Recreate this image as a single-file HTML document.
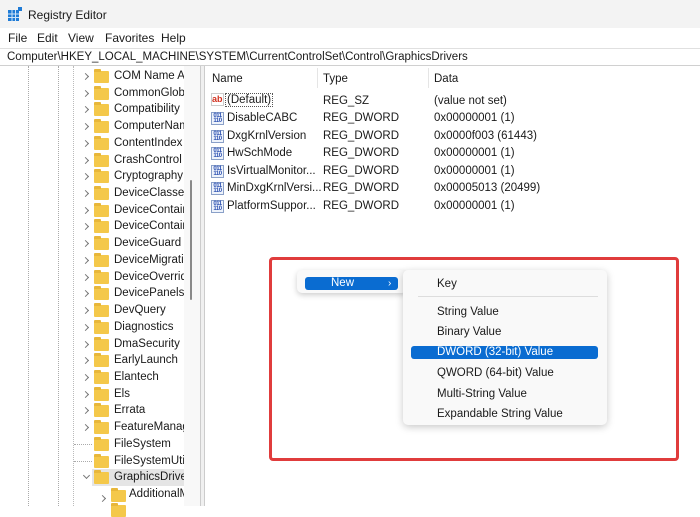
<!DOCTYPE html>
<html><head><style>
*{margin:0;padding:0;box-sizing:border-box}
body{width:700px;height:506px;overflow:hidden;background:#fff;font-family:"Liberation Sans",sans-serif;font-size:11.5px;color:#1a1a1a;position:relative}
.a{position:absolute;white-space:nowrap}
.fold{position:absolute;width:15px;height:12px;background:#f4c84a;border-radius:1px}
.fold:before{content:"";position:absolute;left:0;top:-2px;width:7px;height:3px;background:#e8b73a;border-radius:1px 1px 0 0}
.chev{position:absolute;width:5px;height:5px;border-right:1.3px solid #777;border-top:1.3px solid #777;transform:rotate(45deg)}
.ic{position:absolute;width:13px;height:13px;border:1px solid #8aa0c8;background:#eef3fb;font-size:6px;line-height:5px;color:#2a4fb0;font-weight:bold;text-align:center;padding-top:1px;letter-spacing:-0.5px}
.mi{position:absolute;left:437px;font-size:11.5px}
</style></head><body>
<div class="a" style="left:0;top:0;width:700px;height:28px;background:#f3f3f3"></div>
<svg class="a" style="left:8px;top:7px" width="14" height="14"><rect x="0" y="3" width="11" height="11" fill="#1f7bd6"/><g stroke="#cfe4f8" stroke-width="1"><line x1="0" y1="7" x2="11" y2="7"/><line x1="0" y1="10.5" x2="11" y2="10.5"/><line x1="4" y1="3" x2="4" y2="14"/><line x1="7.5" y1="3" x2="7.5" y2="14"/></g><rect x="10" y="0" width="4" height="4" fill="#1f7bd6"/></svg>
<div class="a" style="left:28px;top:8px;font-size:12px">Registry Editor</div>
<div class="a" style="left:0;top:28px;width:700px;height:20px;background:#fff"></div>
<div class="a" style="left:8px;top:31px;font-size:12px">File</div>
<div class="a" style="left:37px;top:31px;font-size:12px">Edit</div>
<div class="a" style="left:68px;top:31px;font-size:12px">View</div>
<div class="a" style="left:105px;top:31px;font-size:12px">Favorites</div>
<div class="a" style="left:161px;top:31px;font-size:12px">Help</div>
<div class="a" style="left:0;top:48px;width:700px;height:18px;border-top:1px solid #e0e0e0;border-bottom:1px solid #d0d0d0"></div>
<div class="a" style="left:7px;top:51px;font-size:11.5px">Computer\HKEY_LOCAL_MACHINE\SYSTEM\CurrentControlSet\Control\GraphicsDrivers</div>
<div class="a" style="left:28px;top:66px;height:440px;border-left:1px dotted #aaa"></div>
<div class="a" style="left:58px;top:66px;height:440px;border-left:1px dotted #aaa"></div>
<div class="a" style="left:73px;top:66px;height:440px;border-left:1px dotted #bbb"></div>
<div class="a" style="left:184px;top:66px;width:16px;height:440px;background:#f8f8f8"></div>
<div class="a" style="left:190px;top:180px;width:2px;height:120px;background:#8a8a8a;border-radius:1px"></div>
<div class="a" style="left:200px;top:66px;width:5px;height:440px;background:#f0f0f0;border-left:1px solid #ccc;border-right:1px solid #ccc"></div>
<div class="a" style="left:92px;top:469px;width:92px;height:17px;background:#e5e5e5"></div>
<div id="tree"></div>
<div class="a" style="left:317px;top:68px;height:20px;border-left:1px solid #e5e5e5"></div>
<div class="a" style="left:428px;top:68px;height:20px;border-left:1px solid #e5e5e5"></div>
<div class="a" style="left:212px;top:73px">Name</div>
<div class="a" style="left:323px;top:73px">Type</div>
<div class="a" style="left:434px;top:73px">Data</div>
<div class="a" style="left:211px;top:93px;width:13px;height:13px;border:1px solid #ccc;font-size:9px;color:#d2301e;font-weight:bold;line-height:10px">ab</div>
<div class="a" style="left:225px;top:93px;border:1px dotted #555;padding:0 1px">(Default)</div>
<div class="a" style="left:323px;top:95px">REG_SZ</div>
<div class="a" style="left:434px;top:95px">(value not set)</div>
<div id="vals"></div>
<div class="a" style="left:269px;top:257px;width:410px;height:204px;border:3px solid #e03c3c;border-radius:4px"></div>
<div class="a" style="left:297px;top:270px;width:110px;height:23px;background:#f9f9f9;border-radius:5px;box-shadow:0 2px 6px rgba(0,0,0,.2)"></div>
<div class="a" style="left:305px;top:277px;width:93px;height:13px;background:#0a6cd1;border-radius:3px;color:#fff;font-size:11.5px;line-height:13px"><span style="position:absolute;left:26px">New</span><span style="position:absolute;left:83px;font-size:10px">›</span></div>
<div class="a" style="left:403px;top:270px;width:204px;height:155px;background:#f9f9f9;border-radius:5px;box-shadow:0 2px 8px rgba(0,0,0,.22)"></div>
<div class="a" style="left:418px;top:296px;width:180px;height:1px;background:#ddd"></div>
<div class="a" style="left:411px;top:346px;width:187px;height:13px;background:#0a6cd1;border-radius:3px"></div>
<div class="mi" style="top:278px">Key</div>
<div class="mi" style="top:306px">String Value</div>
<div class="mi" style="top:326px">Binary Value</div>
<div class="mi" style="top:346px;color:#fff">DWORD (32-bit) Value</div>
<div class="mi" style="top:367px">QWORD (64-bit) Value</div>
<div class="mi" style="top:388px">Multi-String Value</div>
<div class="mi" style="top:408px">Expandable String Value</div>
<script>
var t=["COM Name A","CommonGlob","Compatibility","ComputerNam","ContentIndex","CrashControl","Cryptography","DeviceClasses","DeviceContain","DeviceContain","DeviceGuard","DeviceMigratio","DeviceOverrid","DevicePanels","DevQuery","Diagnostics","DmaSecurity","EarlyLaunch","Elantech","Els","Errata","FeatureManag","FileSystem","FileSystemUtil","GraphicsDriver"];
var noch={22:1,23:1};var h="";
t.forEach(function(s,i){var y=69+i*16.72;
if(i==24)h+='<div class="chev" style="left:84px;top:'+(y+3)+'px;transform:rotate(135deg)"></div>';
else if(!noch[i])h+='<div class="chev" style="left:83px;top:'+(y+5)+'px"></div>';
else h+='<div class="a" style="left:74px;top:'+(y+7)+'px;width:18px;border-top:1px dotted #aaa"></div>';
h+='<div class="fold" style="left:94px;top:'+(y+2)+'px"></div><div class="a" style="left:114px;top:'+(y+1)+'px;width:70px;overflow:hidden">'+s+'</div>';});
h+='<div class="chev" style="left:100px;top:496px"></div><div class="fold" style="left:111px;top:490px"></div><div class="a" style="left:129px;top:488px;width:55px;overflow:hidden">AdditionalM</div><div class="fold" style="left:111px;top:505px"></div>';
document.getElementById("tree").innerHTML=h;
var v=[["DisableCABC","0x00000001 (1)"],["DxgKrnlVersion","0x0000f003 (61443)"],["HwSchMode","0x00000001 (1)"],["IsVirtualMonitor...","0x00000001 (1)"],["MinDxgKrnlVersi...","0x00005013 (20499)"],["PlatformSuppor...","0x00000001 (1)"]];
var g="";v.forEach(function(r,i){var y=111+i*17.5;
g+='<div class="ic" style="left:211px;top:'+(y+1)+'px">011<br>110</div><div class="a" style="left:227px;top:'+(y+1)+'px;width:94px;overflow:hidden">'+r[0]+'</div><div class="a" style="left:323px;top:'+(y+1)+'px">REG_DWORD</div><div class="a" style="left:434px;top:'+(y+1)+'px">'+r[1]+'</div>';});
document.getElementById("vals").innerHTML=g;
</script>
</body></html>
